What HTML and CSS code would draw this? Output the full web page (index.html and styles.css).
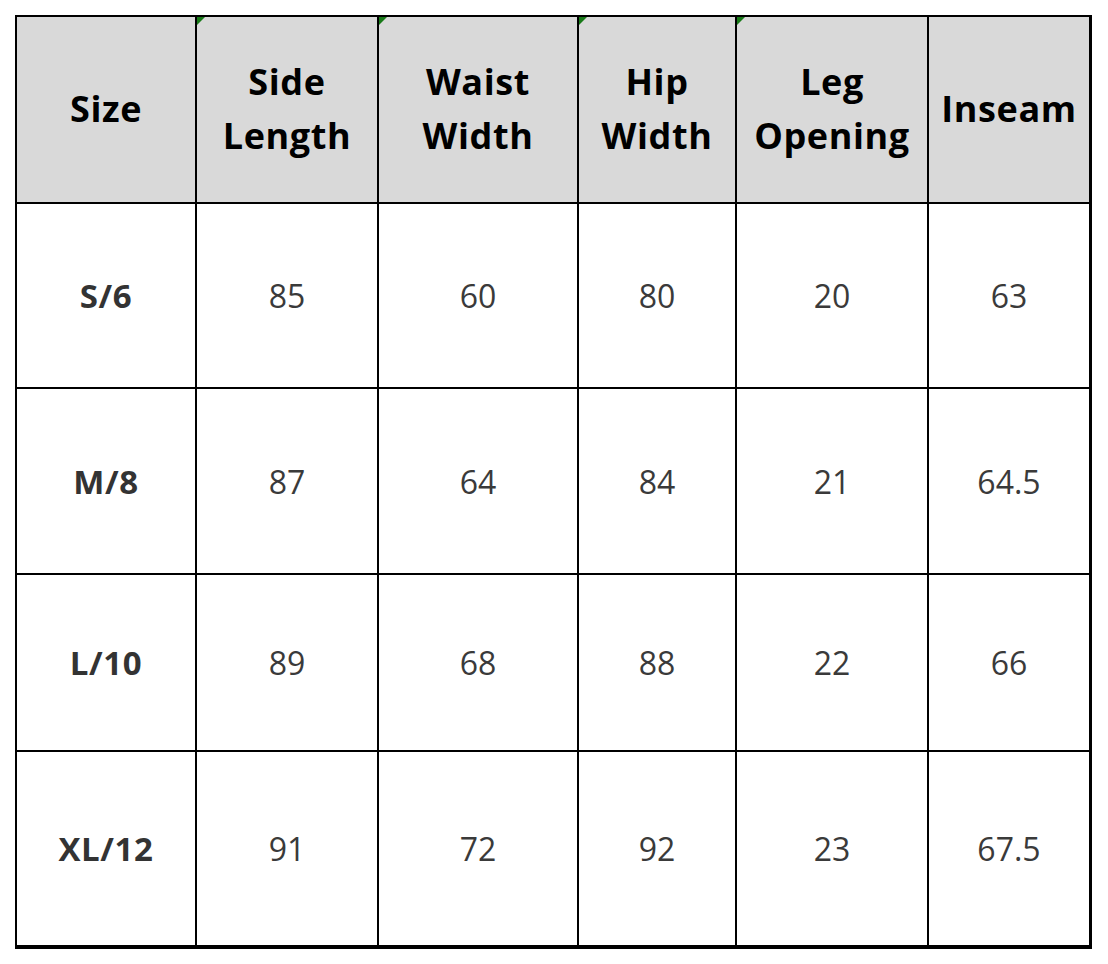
FILE: index.html
```html
<!DOCTYPE html>
<html>
<head>
<meta charset="utf-8">
<link rel="stylesheet" href="styles.css">
</head>
<body>
<div class="sheet">
  <div class="cell head">Size</div>
  <div class="cell head flag">Side<br>Length</div>
  <div class="cell head flag">Waist<br>Width</div>
  <div class="cell head flag">Hip<br>Width</div>
  <div class="cell head flag">Leg<br>Opening</div>
  <div class="cell head">Inseam</div>

  <div class="cell label">S/6</div>
  <div class="cell num">85</div>
  <div class="cell num">60</div>
  <div class="cell num">80</div>
  <div class="cell num">20</div>
  <div class="cell num">63</div>

  <div class="cell label">M/8</div>
  <div class="cell num">87</div>
  <div class="cell num">64</div>
  <div class="cell num">84</div>
  <div class="cell num">21</div>
  <div class="cell num">64.5</div>

  <div class="cell label">L/10</div>
  <div class="cell num">89</div>
  <div class="cell num">68</div>
  <div class="cell num">88</div>
  <div class="cell num">22</div>
  <div class="cell num">66</div>

  <div class="cell label">XL/12</div>
  <div class="cell num">91</div>
  <div class="cell num">72</div>
  <div class="cell num">92</div>
  <div class="cell num">23</div>
  <div class="cell num">67.5</div>
</div>
</body>
</html>
```

FILE: styles.css
```css
html, body {
  margin: 0;
  padding: 0;
  background: #ffffff;
}

body {
  padding: 15px;
  font-family: "Open Sans", "Noto Sans", "Liberation Sans", sans-serif;
}

.sheet {
  display: grid;
  grid-template-columns: 178px 180px 198px 156px 190px 160px;
  grid-template-rows: 185px 183px 184px 175px 193px;
  gap: 2px;
  padding: 2px 3px 4px 2px;
  background: #000000;
  width: max-content;
}

.cell {
  position: relative;
  display: flex;
  align-items: center;
  justify-content: center;
  text-align: center;
  background: #ffffff;
}

.head {
  background: #d9d9d9;
  color: #000000;
  font-weight: 700;
  font-size: 36px;
  line-height: 54px;
  letter-spacing: 0.6px;
  padding-bottom: 2px;
}

.flag::before {
  content: "";
  position: absolute;
  left: 0;
  top: 0;
  width: 0;
  height: 0;
  border-top: 8px solid #187a18;
  border-right: 8px solid transparent;
}

.label {
  color: #333333;
  font-weight: 700;
  font-size: 33px;
  letter-spacing: 0.6px;
}

.num {
  color: #3a3a3a;
  font-weight: 400;
  font-size: 32px;
}
```
